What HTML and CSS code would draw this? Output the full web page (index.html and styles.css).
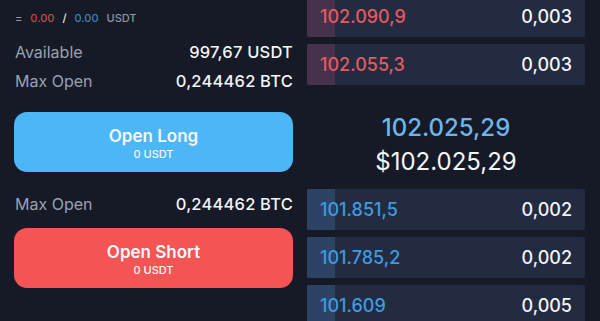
FILE: index.html
```html
<!DOCTYPE html>
<html>
<head>
<meta charset="utf-8">
<link rel="stylesheet" href="styles.css">
</head>
<body>
<div class="app">
  <div class="left">
    <div class="pnl"><span class="muted">=</span><span class="red">0.00</span><span class="slash">/</span><span class="blue">0.00</span><span class="muted">USDT</span></div>
    <div class="info"><span class="label">Available</span><span class="val">997,67 USDT</span></div>
    <div class="info"><span class="label">Max Open</span><span class="val">0,244462 BTC</span></div>
    <button class="btn long"><span class="btn-title">Open Long</span><span class="btn-sub">0 USDT</span></button>
    <div class="info info-gap"><span class="label">Max Open</span><span class="val">0,244462 BTC</span></div>
    <button class="btn short"><span class="btn-title">Open Short</span><span class="btn-sub">0 USDT</span></button>
  </div>
  <div class="right">
    <div class="book asks">
      <div class="row ask"><span class="depth"></span><span class="price">102.090,9</span><span class="qty">0,003</span></div>
      <div class="row ask"><span class="depth"></span><span class="price">102.055,3</span><span class="qty">0,003</span></div>
    </div>
    <div class="mid">
      <div class="mid-price">102.025,29</div>
      <div class="mid-usd">$102.025,29</div>
    </div>
    <div class="book bids">
      <div class="row bid"><span class="depth"></span><span class="price">101.851,5</span><span class="qty">0,002</span></div>
      <div class="row bid"><span class="depth"></span><span class="price">101.785,2</span><span class="qty">0,002</span></div>
      <div class="row bid"><span class="depth"></span><span class="price">101.609</span><span class="qty">0,005</span></div>
    </div>
  </div>
</div>
</body>
</html>
```
FILE: styles.css
```css
* { box-sizing: border-box; }
html, body {
  margin: 0;
  padding: 0;
  width: 600px;
  height: 321px;
  overflow: hidden;
  background: #151a26;
  font-family: Inter, "Noto Sans", sans-serif;
  color: #f1f2f5;
}
.app {
  display: flex;
  height: 321px;
}
.left {
  width: 307px;
  flex-shrink: 0;
  padding: 8px 14px 0 14px;
  display: flex;
  flex-direction: column;
}
.left > * { flex-shrink: 0; }
.pnl {
  height: 20px;
  display: flex;
  align-items: center;
  gap: 8px;
  font-size: 11px;
  font-weight: 500;
  margin-bottom: 9px;
  padding-left: 1px;
}
.muted { color: #8f97a8; }
.red { color: #c8464f; }
.blue { color: #3f84bb; }
.slash { color: #e8e9ee; }
.info {
  height: 29px;
  display: flex;
  align-items: center;
  justify-content: space-between;
  font-size: 16px;
  padding-left: 1px;
}
.label { color: #9aa1b2; }
.val { color: #f3f4f7; font-weight: 500; font-size: 16.5px; letter-spacing: 0.2px; }
.info-gap { margin-top: 17px; }
.btn {
  border: none;
  margin-top: 17px;
  height: 60px;
  width: 279px;
  border-radius: 13px;
  display: flex;
  flex-direction: column;
  align-items: center;
  justify-content: center;
  font-family: Inter, "Noto Sans", sans-serif;
  color: #f4f8fc;
  padding: 2px 0 0 0;
}
.long { background: #4cb6f6; }
.short { background: #f45454; margin-top: 10px; }
.btn-title {
  font-size: 17px;
  font-weight: 600;
  line-height: 21px;
}
.btn-sub {
  font-size: 11px;
  font-weight: 500;
  line-height: 14px;
}
.right {
  width: 278px;
  flex-shrink: 0;
  display: flex;
  flex-direction: column;
}
.right > * { flex-shrink: 0; }
.book {
  display: flex;
  flex-direction: column;
  gap: 7px;
}
.book > * { flex-shrink: 0; }
.asks { margin-top: -4px; }
.row {
  height: 41px;
  background: #222b41;
  border-radius: 2px;
  display: flex;
  align-items: center;
  justify-content: space-between;
  padding: 0 13px 0 13px;
  position: relative;
  font-size: 18px;
  font-weight: 500;
}
.depth {
  position: absolute;
  left: 0;
  top: 0;
  bottom: 0;
  width: 28px;
  border-radius: 2px 0 0 2px;
}
.ask .depth { background: #47324c; }
.bid .depth { background: #2c4363; }
.price, .qty { position: relative; }
.ask .price { color: #e35a60; }
.bid .price { color: #3f9be0; }
.qty { color: #f2f3f6; }
.mid {
  height: 104px;
  padding-top: 26px;
  display: flex;
  flex-direction: column;
  align-items: center;
}
.mid-price {
  height: 34px;
  line-height: 34px;
  font-size: 24px;
  font-weight: 500;
  color: #6cb6ea;
}
.mid-usd {
  height: 34px;
  line-height: 34px;
  font-size: 24px;
  font-weight: 400;
  color: #f4f5f8;
}
```
